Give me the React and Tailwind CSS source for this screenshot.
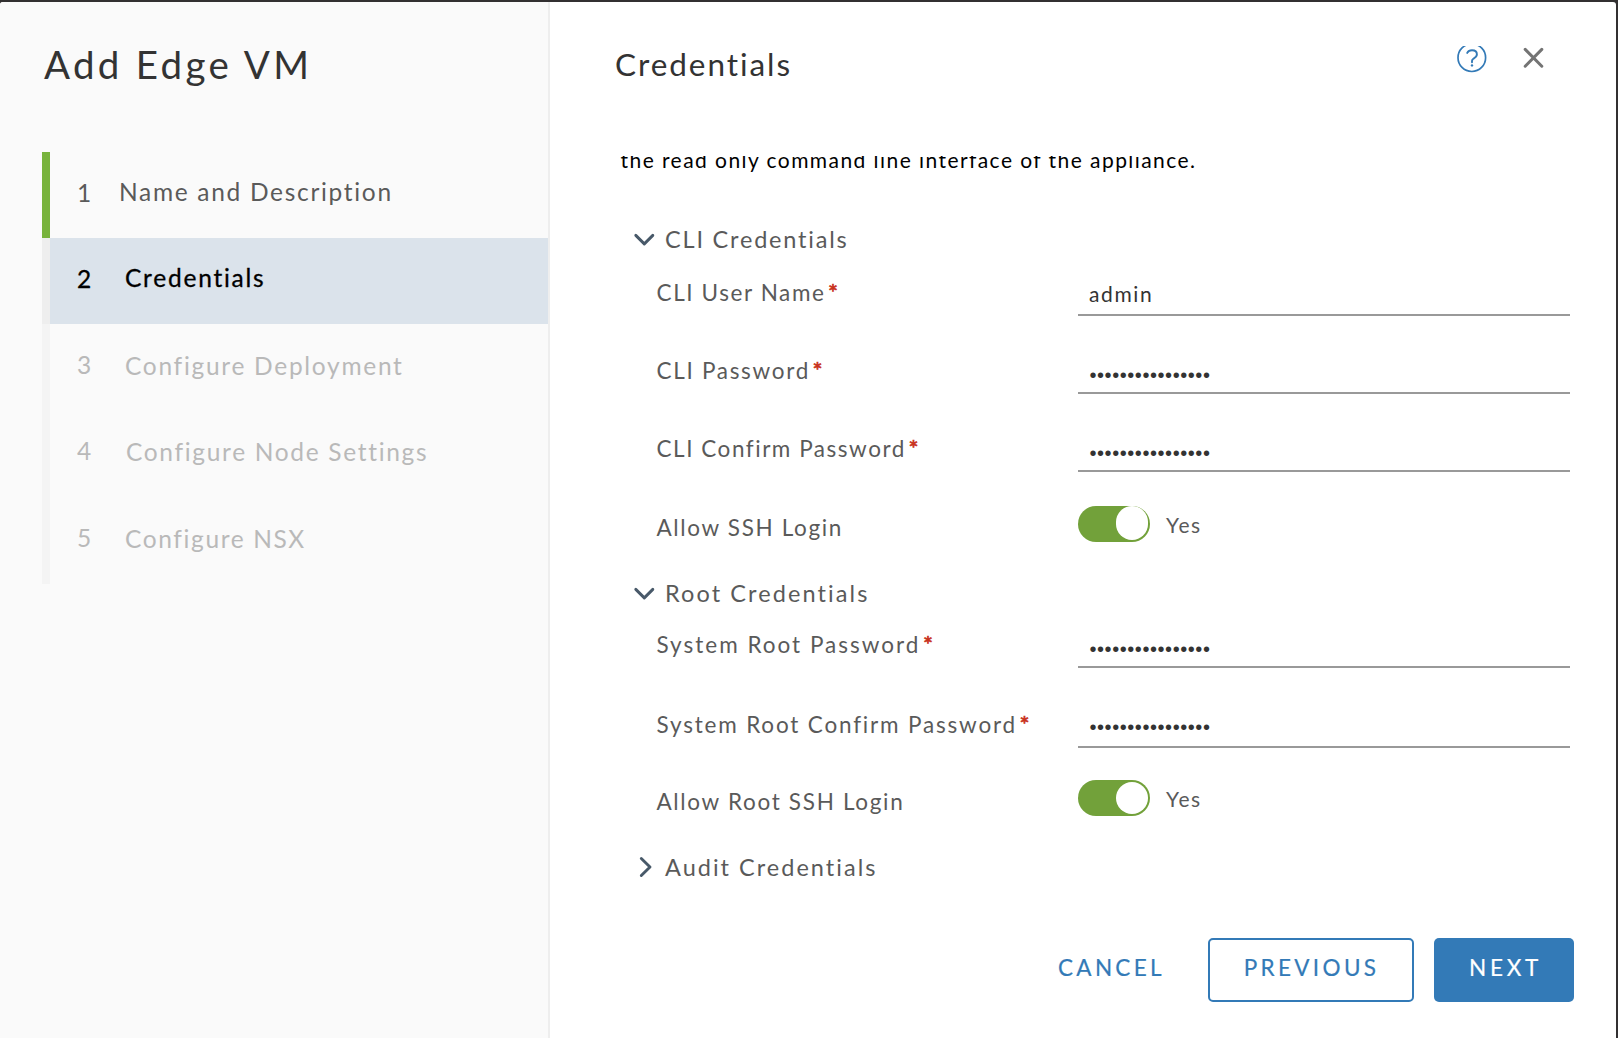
import React from "react";

const steps = [
  { n: "1", label: "Name and Description", row: "h-[86px]", bar: "bg-[#78b33c]", text: "pt-[25px] text-[#5a5a5a]", num: "mt-[1px] w-[42px]", ls: "tracking-[1.69px]" },
  { n: "2", label: "Credentials", row: "h-[86px]", bar: "bg-[#eeeeee]", text: "pt-[25px] bg-[#dbe3eb] text-black [-webkit-text-stroke:0.3px_black]", num: "mt-[1px] w-[48px]", ls: "tracking-[1.77px]" },
  { n: "3", label: "Configure Deployment", row: "h-[87px]", bar: "bg-[#f4f4f4]", text: "pt-[27px] text-[#b9b9b9]", num: "-mt-[1px] w-[48px]", ls: "tracking-[1.71px]" },
  { n: "4", label: "Configure Node Settings", row: "h-[86px]", bar: "bg-[#f4f4f4]", text: "pt-[26px] text-[#b9b9b9]", num: "-mt-[1px] w-[49px]", ls: "tracking-[1.68px]" },
  { n: "5", label: "Configure NSX", row: "h-[87px]", bar: "bg-[#f4f4f4]", text: "pt-[27px] text-[#b9b9b9]", num: "-mt-[1px] w-[48px]", ls: "tracking-[1.62px]" },
];

function Step({ step }) {
  return (
    <li className={`flex ${step.row}`}>
      <div className={`w-2 ${step.bar}`} />
      <div className={`flex flex-1 items-start pl-[27px] text-[24.5px] leading-[30px] ${step.text}`}>
        <span className={`shrink-0 ${step.num}`}>{step.n}</span>
        <span className={step.ls}>{step.label}</span>
      </div>
    </li>
  );
}

function Section({ label, ls, open }) {
  return (
    <div className="flex h-9 items-center">
      <svg width="24" height="24" viewBox="0 0 24 24" fill="none" stroke="#485969" strokeWidth="2.9" strokeLinecap="round" strokeLinejoin="round" className="mr-[8px] ml-[32px]">
        {open ? <path d="M3.8 8.4 12.3 16.9 20.8 8.4" /> : <path d="M9.3 3.5 18 12 9.3 20.5" />}
      </svg>
      <span className={`pt-[2px] pl-[1px] text-[23.5px] text-[#5a5a5a] ${ls}`}>{label}</span>
    </div>
  );
}

function Row({ label, ls, required, height, pad, children }) {
  return (
    <div className={`flex items-start pl-[56.5px] ${height}`}>
      <div className={`w-[421.5px] text-[22.5px] leading-[30px] whitespace-nowrap text-[#5a5a5a] ${pad}`}>
        <span className={ls}>{label}</span>
        {required && <span className="ml-[2.5px] text-[23.5px] text-[#c9321d] [-webkit-text-stroke:0.7px_#c9321d]">*</span>}
      </div>
      {children}
    </div>
  );
}

function Field({ children }) {
  return <div className="flex h-[54px] w-[492px] border-b-2 border-[#999999] pl-[11px] text-[#333333]">{children}</div>;
}

function Password({ pad }) {
  return (
    <Field>
      <span className={`pl-[0.5px] font-['Liberation_Sans',sans-serif] text-[20px] leading-[30px] tracking-[0.56px] ${pad}`}>••••••••••••••••</span>
    </Field>
  );
}

function Toggle({ knob }) {
  return (
    <div className="mt-[10px] flex h-9 items-center">
      <div className="flex h-9 w-[72px] justify-end rounded-full bg-[#72a13a] pr-[2px]">
        <div className={`w-8 rounded-full bg-white ${knob}`} />
      </div>
      <span className="ml-4 pt-px text-[21px] tracking-[1.6px] text-[#5a5a5a]">Yes</span>
    </div>
  );
}

export default function App() {
  return (
    <div className="h-[1038px] w-[1618px] overflow-hidden bg-[#323031] pt-[2px] pr-[2px] font-['Lato',sans-serif]">
      <div className="flex h-[1036px] overflow-hidden rounded-t-[3px] bg-white">
        <aside className="w-[550px] shrink-0 border-r-2 border-[#eeeeee] bg-[#fafafa] pl-[42px]">
          <h1 className="h-[150px] pt-[40px] pl-[2px] text-[38.5px] leading-[44px] tracking-[3.3px] text-[#333333]">Add Edge VM</h1>
          <ol>
            {steps.map((s) => (
              <Step key={s.n} step={s} />
            ))}
          </ol>
        </aside>
        <main className="flex flex-1 flex-col">
          <header className="flex h-[154px] items-start">
            <h2 className="mt-[42px] ml-[65px] w-[840px] text-[31.5px] leading-[40px] tracking-[1.95px] text-[#333333]">Credentials</h2>
            <svg width="34" height="30" viewBox="0 0 34 30" fill="none" stroke="#337ab7" className="mt-[44px]">
              <circle cx="16.8" cy="11.7" r="13.8" strokeWidth="1.7" />
              <path d="M12.2 6.9C13.1 5.2 14.9 4.3 17 4.3c2.8 0 4.9 1.5 4.9 4 0 2.7-2 3.5-3.5 4.4-1 .6-1.4 1.2-1.4 2.2v1.4" strokeWidth="1.9" strokeLinecap="round" />
              <circle cx="17" cy="19.4" r="1.2" fill="#337ab7" stroke="none" />
            </svg>
            <svg width="24" height="24" viewBox="0 0 24 24" stroke="#747474" strokeWidth="3" strokeLinecap="round" className="mt-[44px] ml-[33px]">
              <path d="M3.2 3.4 19.8 20.2M19.8 3.4 3.2 20.2" />
            </svg>
          </header>
          <div className="h-[782px] overflow-hidden">
            <p className="-mt-[11px] mb-[46px] pl-[70.5px] text-[21px] leading-[30px] tracking-[1.44px] whitespace-nowrap text-black">
              the read only command line interface of the appliance.
            </p>
            <div className="pl-[50px]">
              <Section label="CLI Credentials" ls="tracking-[1.81px]" open />
              <div className="pt-[5px]">
                <Row label="CLI User Name" ls="tracking-[1.6px]" required height="h-[78px]" pad="pt-[15px]">
                  <Field>
                    <span className="pt-[17px] text-[21px] leading-[30px] tracking-[1.6px]">admin</span>
                  </Field>
                </Row>
                <Row label="CLI Password" ls="tracking-[1.7px]" required height="h-[78px]" pad="pt-[15px]">
                  <Password pad="pt-[20px]" />
                </Row>
                <Row label="CLI Confirm Password" ls="tracking-[1.53px]" required height="h-[78px]" pad="pt-[15px]">
                  <Password pad="pt-[20px]" />
                </Row>
                <Row label="Allow SSH Login" ls="tracking-[1.65px]" height="h-[79px]" pad="pt-[17px]">
                  <Toggle knob="h-[34px]" />
                </Row>
              </div>
              <Section label="Root Credentials" ls="tracking-[2.1px]" open />
              <div className="pt-[3px]">
                <Row label="System Root Password" ls="tracking-[2px]" required height="h-[80px]" pad="pt-[15px]">
                  <Password pad="pt-[20px]" />
                </Row>
                <Row label="System Root Confirm Password" ls="tracking-[1.82px]" required height="h-[76px]" pad="pt-[15px]">
                  <Password pad="pt-[18px]" />
                </Row>
                <Row label="Allow Root SSH Login" ls="tracking-[1.68px]" height="h-[79px]" pad="pt-[17px]">
                  <Toggle knob="mt-[2px] h-8" />
                </Row>
              </div>
              <Section label="Audit Credentials" ls="tracking-[2.02px]" />
            </div>
          </div>
          <footer className="flex justify-end pr-[42px] text-[22.5px] leading-[30px] text-[#337ab7] [-webkit-text-stroke:0.2px_currentColor]">
            <button className="mr-[20px] h-16 w-[130px] pb-[5px] text-left tracking-[3.31px]">CANCEL</button>
            <button className="mr-[20px] h-16 w-[206px] rounded-[5px] border-2 border-[#337ab7] pb-[5px] pl-[1px] tracking-[3.35px]">PREVIOUS</button>
            <button className="h-16 w-[140px] rounded-[5px] bg-[#337ab7] pb-[5px] pl-[3px] tracking-[3.7px] text-white">NEXT</button>
          </footer>
        </main>
      </div>
    </div>
  );
}
